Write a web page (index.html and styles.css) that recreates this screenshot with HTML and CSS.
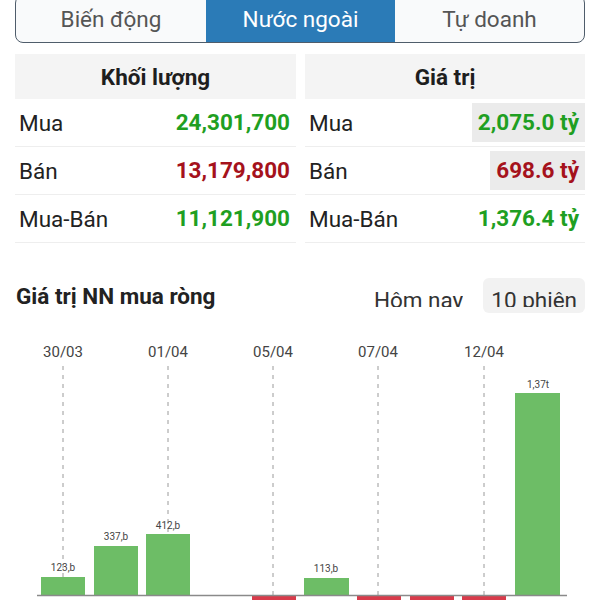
FILE: index.html
```html
<!DOCTYPE html>
<html lang="vi">
<head>
<meta charset="UTF-8">
<meta name="viewport" content="width=device-width, initial-scale=1.0">
<title>Nước ngoài</title>
<link rel="stylesheet" href="styles.css">
</head>
<body>

<div class="page">
  <div class="tabs">
    <div class="tab">Biến động</div>
    <div class="tab active">Nước ngoài</div>
    <div class="tab">Tự doanh</div>
  </div>

  <div class="tables">
    <div class="card">
      <div class="card-head">Khối lượng</div>
      <div class="row"><span class="label">Mua</span><span class="value up">24,301,700</span></div>
      <div class="row"><span class="label">Bán</span><span class="value down">13,179,800</span></div>
      <div class="row"><span class="label">Mua-Bán</span><span class="value up">11,121,900</span></div>
    </div>
    <div class="card">
      <div class="card-head">Giá trị</div>
      <div class="row"><span class="label">Mua</span><span class="value up flash">2,075.0 tỷ</span></div>
      <div class="row"><span class="label">Bán</span><span class="value down flash">698.6 tỷ</span></div>
      <div class="row"><span class="label">Mua-Bán</span><span class="value up">1,376.4 tỷ</span></div>
    </div>
  </div>

  <div class="chart-head">
    <h2>Giá trị NN mua ròng</h2>
    <div class="switch">
      <div class="switch-btn"><span>Hôm nay</span></div>
      <div class="switch-btn selected"><span>10 phiên</span></div>
    </div>
  </div>

  <svg class="chart" width="570" height="270" viewBox="15 330 570 270">
    <g class="dates">
      <text x="63" y="357">30/03</text>
      <text x="168" y="357">01/04</text>
      <text x="273" y="357">05/04</text>
      <text x="378" y="357">07/04</text>
      <text x="484" y="357">12/04</text>
    </g>
    <g class="grid">
      <line x1="63" y1="366" x2="63" y2="600"/>
      <line x1="168" y1="366" x2="168" y2="600"/>
      <line x1="273" y1="366" x2="273" y2="600"/>
      <line x1="378" y1="366" x2="378" y2="600"/>
      <line x1="484" y1="366" x2="484" y2="600"/>
    </g>
    <g class="bars-up">
      <rect x="41" y="577" width="44" height="19"/>
      <rect x="94" y="546" width="44" height="50"/>
      <rect x="146" y="534" width="44" height="62"/>
      <rect x="304" y="578" width="45" height="18"/>
      <rect x="515" y="393" width="45" height="203"/>
    </g>
    <g class="bars-down">
      <rect x="252" y="596" width="44" height="10"/>
      <rect x="357" y="596" width="44" height="10"/>
      <rect x="410" y="596" width="44" height="10"/>
      <rect x="462" y="596" width="44" height="10"/>
    </g>
    <line class="axis" x1="37" y1="595.5" x2="567" y2="595.5"/>
    <g class="bar-labels">
      <text x="63" y="571">123,b</text>
      <text x="116" y="540">337,b</text>
      <text x="168" y="529">412,b</text>
      <text x="326" y="572">113,b</text>
      <text x="538" y="388">1,37t</text>
    </g>
  </svg>
</div>

</body>
</html>
```

FILE: styles.css
```css
body {
  margin: 0;
  background: #fff;
  font-family: Roboto, "Noto Sans", sans-serif;
  color: #222;
  overflow: hidden;
}

.page {
  width: 570px;
  padding: 0 15px;
}

.tabs {
  display: grid;
  grid-template-columns: 190px 189px 1fr;
  height: 46px;
  margin-top: -5px;
  border: 1.5px solid #4f5d6b;
  border-radius: 8px;
  overflow: hidden;
  background: #f9fafb;
}

.tab {
  display: flex;
  justify-content: center;
  align-items: center;
  font-size: 22.5px;
  color: #555;
}

.tab.active {
  background: #2b7bb7;
  color: #fff;
}

.tables {
  display: grid;
  grid-template-columns: 281px 1fr;
  gap: 9px;
  margin-top: 11px;
}

.card-head {
  height: 45px;
  background: #f4f4f4;
  display: flex;
  justify-content: center;
  align-items: center;
  font-size: 22.5px;
  font-weight: bold;
  color: #1e1e1e;
}

.row {
  display: flex;
  justify-content: space-between;
  align-items: center;
  height: 47px;
  border-bottom: 1px solid #eeeeee;
  font-size: 22.5px;
}

.label {
  padding-left: 4px;
  color: #222;
}

.value {
  font-weight: bold;
  padding: 0 6px;
  line-height: 39px;
}

.value.flash {
  background: #ebebeb;
}

.up {
  color: #1f9f22;
}

.down {
  color: #a5121c;
}

.chart-head {
  display: flex;
  justify-content: space-between;
  align-items: center;
  margin-top: 35px;
  height: 35px;
}

.chart-head h2 {
  margin: 0 0 0 1px;
  font-size: 22.5px;
  font-weight: bold;
  color: #222;
}

.switch {
  display: flex;
  gap: 12px;
}

.switch-btn {
  height: 35px;
  padding: 0 8px;
  border-radius: 6px;
  font-size: 22.5px;
  color: #333;
}

.switch-btn span {
  display: block;
  height: 29px;
  line-height: 45px;
  overflow: hidden;
}

.switch-btn.selected {
  background: #f2f2f2;
}

.chart {
  display: block;
  margin-top: 17px;
  overflow: hidden;
}

.dates text {
  font-family: Roboto, sans-serif;
  font-size: 15px;
  fill: #444;
  text-anchor: middle;
}

.grid line {
  stroke: #9a9a9a;
  stroke-width: 1;
  stroke-dasharray: 4 5;
}

.bars-up rect {
  fill: #6dbd66;
}

.bars-down rect {
  fill: #d83b4b;
}

.axis {
  stroke: #8a8a8a;
  stroke-width: 1.5;
}

.bar-labels text {
  font-family: Roboto, sans-serif;
  font-size: 10px;
  fill: #444;
  text-anchor: middle;
}
```
